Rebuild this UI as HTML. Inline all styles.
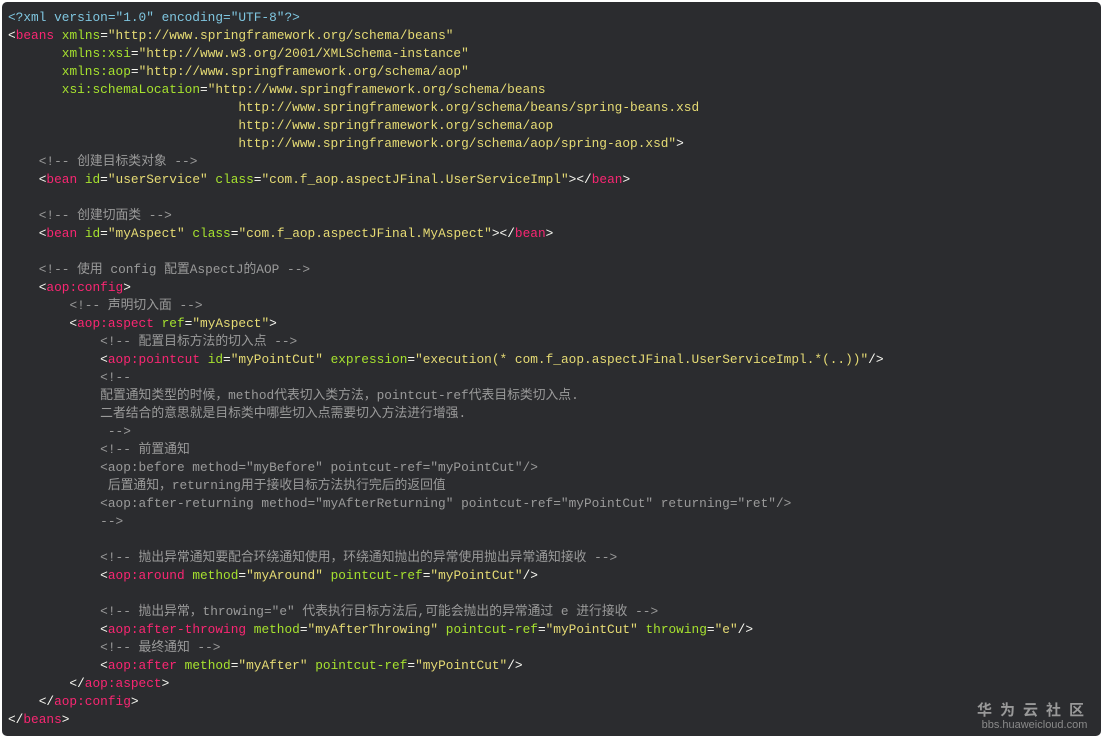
<!DOCTYPE html>
<html><head><meta charset="utf-8"><style>
html,body{margin:0;padding:0;background:#fff;width:1106px;height:740px;overflow:hidden}
.box{position:absolute;left:2px;top:2px;width:1099px;height:734px;background:#2b2c2f;border-radius:5px}
pre{margin:0;position:absolute;left:8px;top:9px;font-family:"Liberation Mono","Noto Sans CJK SC",monospace;font-size:12.8px;line-height:18px;color:#f8f8f2;white-space:pre}
.d{color:#7fc6e0}.t{color:#f92672}.a{color:#a6e22e}.v{color:#e6db74}.c{color:#9a9a9a}
.wm{position:absolute;right:14px;bottom:9px;color:#8a8a8a;font-family:"Liberation Sans","Noto Sans CJK SC",sans-serif;text-align:center}
.wm .z{font-size:15px;letter-spacing:8px;font-weight:bold;color:#999}
.wm .u{font-size:11px;margin-top:-1px}
</style></head><body><div class="box"></div>
<pre><span class="d">&lt;?xml version="1.0" encoding="UTF-8"?&gt;</span>
&lt;<span class="t">beans</span> <span class="a">xmlns</span>=<span class="v">"http://www.springframework.org/schema/beans"</span>
       <span class="a">xmlns:xsi</span>=<span class="v">"http://www.w3.org/2001/XMLSchema-instance"</span>
       <span class="a">xmlns:aop</span>=<span class="v">"http://www.springframework.org/schema/aop"</span>
       <span class="a">xsi:schemaLocation</span>=<span class="v">"http://www.springframework.org/schema/beans
                              http://www.springframework.org/schema/beans/spring-beans.xsd
                              http://www.springframework.org/schema/aop
                              http://www.springframework.org/schema/aop/spring-aop.xsd"</span>&gt;
    <span class="c">&lt;!-- 创建目标类对象 --&gt;</span>
    &lt;<span class="t">bean</span> <span class="a">id</span>=<span class="v">"userService"</span> <span class="a">class</span>=<span class="v">"com.f_aop.aspectJFinal.UserServiceImpl"</span>&gt;&lt;/<span class="t">bean</span>&gt;

    <span class="c">&lt;!-- 创建切面类 --&gt;</span>
    &lt;<span class="t">bean</span> <span class="a">id</span>=<span class="v">"myAspect"</span> <span class="a">class</span>=<span class="v">"com.f_aop.aspectJFinal.MyAspect"</span>&gt;&lt;/<span class="t">bean</span>&gt;

    <span class="c">&lt;!-- 使用 config 配置AspectJ的AOP --&gt;</span>
    &lt;<span class="t">aop:config</span>&gt;
        <span class="c">&lt;!-- 声明切入面 --&gt;</span>
        &lt;<span class="t">aop:aspect</span> <span class="a">ref</span>=<span class="v">"myAspect"</span>&gt;
            <span class="c">&lt;!-- 配置目标方法的切入点 --&gt;</span>
            &lt;<span class="t">aop:pointcut</span> <span class="a">id</span>=<span class="v">"myPointCut"</span> <span class="a">expression</span>=<span class="v">"execution(* com.f_aop.aspectJFinal.UserServiceImpl.*(..))"</span>/&gt;
<span class="c">            &lt;!--
            配置通知类型的时候，method代表切入类方法，pointcut-ref代表目标类切入点.
            二者结合的意思就是目标类中哪些切入点需要切入方法进行增强.
             --&gt;
            &lt;!-- 前置通知
            &lt;aop:before method="myBefore" pointcut-ref="myPointCut"/&gt;
             后置通知，returning用于接收目标方法执行完后的返回值
            &lt;aop:after-returning method="myAfterReturning" pointcut-ref="myPointCut" returning="ret"/&gt;
            --&gt;</span>

            <span class="c">&lt;!-- 抛出异常通知要配合环绕通知使用，环绕通知抛出的异常使用抛出异常通知接收 --&gt;</span>
            &lt;<span class="t">aop:around</span> <span class="a">method</span>=<span class="v">"myAround"</span> <span class="a">pointcut-ref</span>=<span class="v">"myPointCut"</span>/&gt;

            <span class="c">&lt;!-- 抛出异常，throwing="e" 代表执行目标方法后,可能会抛出的异常通过 e 进行接收 --&gt;</span>
            &lt;<span class="t">aop:after-throwing</span> <span class="a">method</span>=<span class="v">"myAfterThrowing"</span> <span class="a">pointcut-ref</span>=<span class="v">"myPointCut"</span> <span class="a">throwing</span>=<span class="v">"e"</span>/&gt;
            <span class="c">&lt;!-- 最终通知 --&gt;</span>
            &lt;<span class="t">aop:after</span> <span class="a">method</span>=<span class="v">"myAfter"</span> <span class="a">pointcut-ref</span>=<span class="v">"myPointCut"</span>/&gt;
        &lt;/<span class="t">aop:aspect</span>&gt;
    &lt;/<span class="t">aop:config</span>&gt;
&lt;/<span class="t">beans</span>&gt;</pre>
<div class="wm"><div class="z">华为云社区</div><div class="u">bbs.huaweicloud.com</div></div>
</body></html>
